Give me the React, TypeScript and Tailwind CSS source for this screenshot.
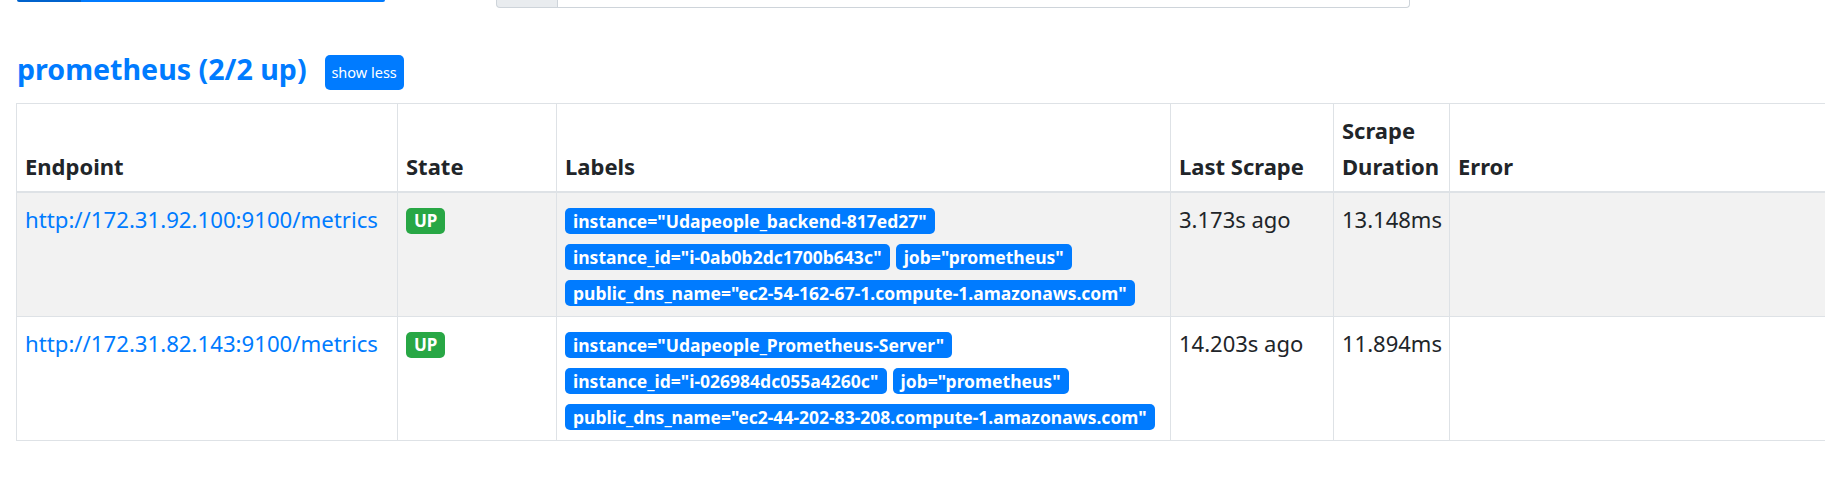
import React from 'react';

type Target = {
  endpoint: string;
  labels: string[];
  lastScrape: string;
  duration: string;
};

const targets: Target[] = [
  {
    endpoint: 'http://172.31.92.100:9100/metrics',
    labels: [
      'instance="Udapeople_backend-817ed27"',
      'instance_id="i-0ab0b2dc1700b643c"',
      'job="prometheus"',
      'public_dns_name="ec2-54-162-67-1.compute-1.amazonaws.com"',
    ],
    lastScrape: '3.173s ago',
    duration: '13.148ms',
  },
  {
    endpoint: 'http://172.31.82.143:9100/metrics',
    labels: [
      'instance="Udapeople_Prometheus-Server"',
      'instance_id="i-026984dc055a4260c"',
      'job="prometheus"',
      'public_dns_name="ec2-44-202-83-208.compute-1.amazonaws.com"',
    ],
    lastScrape: '14.203s ago',
    duration: '11.894ms',
  },
];

const th = 'border-r border-b-2 border-[#dee2e6] px-2 pt-2 pb-[7px] align-bottom text-left text-[22px] leading-[36px] font-bold';
const td = 'border-r border-b border-[#dee2e6] px-2 align-top';

const App: React.FC = () => {
  return (
    <div className="w-[1825px] h-[493px] overflow-hidden bg-white text-[#212529] font-['Noto_Sans',sans-serif]">
      {/* top controls, mostly scrolled off */}
      <div className="flex items-start h-[8px]">
        <div className="ml-[17px] flex h-[2px] w-[368px] overflow-hidden rounded-b-[4px]">
          <div className="w-[64px] bg-[#0062cc]" />
          <div className="flex-1 bg-[#007bff]" />
        </div>
        <div className="ml-[111px] flex h-[8px] w-[914px]">
          <div className="w-[62px] rounded-bl-[4px] border border-t-0 border-[#ced4da] bg-[#e9ecef]" />
          <div className="flex-1 rounded-br-[4px] border border-l-0 border-t-0 border-[#ced4da] bg-white" />
        </div>
      </div>

      <div className="mt-[42px] flex items-start pl-[17px]">
        <h2 className="pt-px text-[28.6px] leading-[36px] font-bold text-[#007bff]">prometheus (2/2 up)</h2>
        <button className="ml-[18px] mt-[5px] h-[35px] w-[79px] rounded-[5px] bg-[#007bff] text-[14.5px] text-white">
          show less
        </button>
      </div>

      <table className="mt-[13px] ml-[16px] w-[1834px] table-fixed border-separate border-spacing-0 border-l border-t border-[#dee2e6]">
        <colgroup>
          <col className="w-[381px]" />
          <col className="w-[159px]" />
          <col className="w-[614px]" />
          <col className="w-[163px]" />
          <col className="w-[116px]" />
          <col className="w-[400px]" />
        </colgroup>
        <thead>
          <tr>
            <th className={th}>Endpoint</th>
            <th className={th}>State</th>
            <th className={th}>Labels</th>
            <th className={th}>Last Scrape</th>
            <th className={th}>Scrape Duration</th>
            <th className={th}>Error</th>
          </tr>
        </thead>
        <tbody>
          {targets.map((t, i) => (
            <tr key={t.endpoint} className={i % 2 === 0 ? 'bg-[#f2f2f2]' : 'bg-white'}>
              <td className={`${td} pt-[10px] text-[22.2px] leading-[33px]`}>
                <a href="#" className="text-[#007bff]">{t.endpoint}</a>
              </td>
              <td className={`${td} pt-[15px]`}>
                <span className="inline-block h-[26px] rounded-[5px] bg-[#28a745] px-2 text-[17px] leading-[26px] font-bold text-white">
                  UP
                </span>
              </td>
              <td className={`${td} pt-[15px] pb-[10px]`}>
                <div className="flex flex-wrap gap-x-[6px] gap-y-[10px]">
                  {t.labels.map((l) => (
                    <span key={l} className="h-[26px] whitespace-nowrap rounded-[5px] bg-[#007bff] px-2 text-[17.5px] leading-[26px] font-bold text-white">
                      {l}
                    </span>
                  ))}
                </div>
              </td>
              <td className={`${td} pt-[10px] text-[22px] leading-[33px]`}>{t.lastScrape}</td>
              <td className={`${td} pt-[10px] text-[22px] leading-[33px]`}>{t.duration}</td>
              <td className={td} />
            </tr>
          ))}
        </tbody>
      </table>
    </div>
  );
};

export default App;
